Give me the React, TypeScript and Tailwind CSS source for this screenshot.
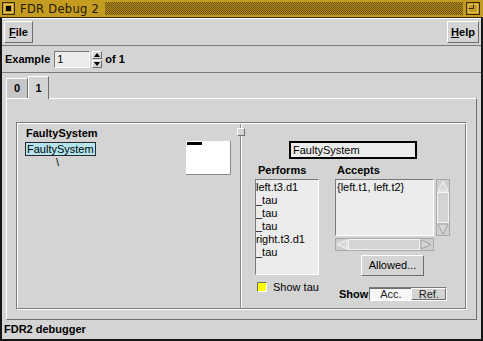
import React from 'react'

// Motif-style bevels
const raised = 'border border-t-white border-l-white border-r-[#6e6e6e] border-b-[#6e6e6e]'
const sunken = 'border border-t-[#7a7a7a] border-l-[#7a7a7a] border-r-white border-b-white'

const performs = ['left.t3.d1', '_tau', '_tau', '_tau', 'right.t3.d1', '_tau']

function TitleBar() {
  return (
    <div className="h-[18px] bg-[#c49c22] border-b border-[#3a2c00] flex items-center pl-[2px] pr-[3px]">
      <div className="w-[13px] h-[13px] border border-[#3a2c00] flex items-center justify-center">
        <div className="w-[9px] h-[9px] border border-[#e4c45c] flex items-center justify-center">
          <div className="w-[5px] h-[5px] bg-black" />
        </div>
      </div>
      <span className="ml-[5px] text-[11.5px] leading-[14px] font-['DejaVu_Sans',sans-serif] text-[#241a00] tracking-[0.3px]">
        FDR Debug 2
      </span>
      <div className="ml-[6px] flex-1 h-[13px] bg-[repeating-conic-gradient(#6e5210_0%_25%,#b08a1e_0%_50%)] bg-[length:2px_2px]" />
      <svg width="14" height="13" viewBox="0 0 14 13" className="ml-[3px]">
        <rect x="0.5" y="0.5" width="13" height="12" fill="#c49c22" stroke="#3a2c00" />
        <rect x="2.5" y="2.5" width="9" height="8" fill="none" stroke="#e4c45c" />
        <path d="M2.5 6.5 H7.5 V2.5" fill="none" stroke="#3a2c00" />
      </svg>
    </div>
  )
}

function VScroll() {
  return (
    <svg width="14" height="57" viewBox="0 0 14 57" className="ml-[2px]">
      <rect x="0.5" y="0.5" width="13" height="56" fill="#cfcfcf" stroke="#a8a8a8" />
      <polygon points="7,2 12,12 2,12" fill="#d8d8d8" stroke="#f4f4f4" />
      <rect x="1.5" y="13.5" width="11" height="30" fill="#d4d4d4" stroke="#f4f4f4" />
      <polygon points="2,45 12,45 7,55" fill="#d8d8d8" stroke="#a0a0a0" />
    </svg>
  )
}

function HScroll() {
  return (
    <svg width="99" height="13" viewBox="0 0 99 13" className="mt-[2px]">
      <rect x="0.5" y="0.5" width="98" height="12" fill="#cfcfcf" stroke="#a8a8a8" />
      <polygon points="2,6.5 12,2 12,11" fill="#d8d8d8" stroke="#f4f4f4" />
      <rect x="13.5" y="1.5" width="71" height="10" fill="#d4d4d4" stroke="#f4f4f4" />
      <polygon points="86,2 96,6.5 86,11" fill="#d8d8d8" stroke="#a0a0a0" />
    </svg>
  )
}

export default function App() {
  return (
    <div className="w-[483px] h-[341px] overflow-hidden bg-[#d4d4d4] flex flex-col font-['Liberation_Sans',Arial,sans-serif] text-black">
      <TitleBar />
      <div className="flex-1 flex flex-col border-x-2 border-b-2 border-[#161616]">
        {/* menu bar */}
        <div className="h-[28px] border-t border-t-white border-b border-b-[#7a7a7a] flex items-center justify-between px-[2px]">
          <div className={`${raised} w-[29px] h-[22px] flex items-center justify-center text-[11px] font-bold`}>
            <span className="underline">F</span>ile
          </div>
          <div className={`${raised} w-[32px] h-[22px] flex items-center justify-center text-[11px] font-bold`}>
            <span className="underline">H</span>elp
          </div>
        </div>

        {/* example selector */}
        <div className="h-[27px] border-b border-b-[#7a7a7a] flex items-center px-[3px]">
          <span className="text-[11px] font-bold">Example</span>
          <div className={`${sunken} ml-[4px] w-[36px] h-[17px] bg-[#ececec] text-[11px] leading-[15px] pl-[2px]`}>1</div>
          <div className="ml-[2px] flex flex-col gap-[1px]">
            <div className={`${raised} w-[10px] h-[8px] flex items-center justify-center`}>
              <svg width="6" height="4" viewBox="0 0 6 4"><polygon points="3,0 6,4 0,4" fill="#000" /></svg>
            </div>
            <div className={`${raised} w-[10px] h-[8px] flex items-center justify-center`}>
              <svg width="6" height="4" viewBox="0 0 6 4"><polygon points="0,0 6,0 3,4" fill="#000" /></svg>
            </div>
          </div>
          <span className="ml-[3px] text-[11px] font-bold">of 1</span>
        </div>

        {/* tabs */}
        <div className="flex-1 flex flex-col px-[4px] pt-[4px]">
          <div className="h-[21px] flex items-end">
            <div className="w-[22px] h-[20px] bg-[#c6c6c6] border-t border-l border-white border-r border-r-[#6e6e6e] flex items-center justify-center text-[11px] font-bold">
              0
            </div>
            <div className="relative z-10 -mb-[1px] w-[21px] h-[23px] bg-[#d4d4d4] border-t border-l border-white border-r border-r-[#6e6e6e] flex items-center justify-center text-[11px] font-bold">
              1
            </div>
          </div>
          <div className="flex-1 border border-t-white border-l-white border-r-[#6e6e6e] border-b-[#6e6e6e] pt-[23px] pl-[9px] pr-[9px] pb-[9px] flex">
            {/* groove frame */}
            <div className={`${sunken} flex-1 flex`}>
              <div className="flex-1 flex border border-t-white border-l-white border-r-[#7a7a7a] border-b-[#7a7a7a]">
                {/* left pane: process tree */}
                <div className="w-[221px] flex flex-col pl-[7px] pt-[3px] pr-[8px]">
                  <div className="text-[11px] font-bold leading-[13px] pl-[1px]">FaultySystem</div>
                  <div className="mt-[1px] flex justify-between">
                    <div className="flex flex-col pt-[1px]">
                      <div className="self-start border border-[#2a2a2a] bg-[#b4e4f0] h-[14px] px-[1px] text-[11px] leading-[12px]">
                        FaultySystem
                      </div>
                      <div className="ml-[31px] text-[11px] leading-[13px]">\</div>
                    </div>
                    <div className="w-[45px] h-[34px] bg-white border-r border-b border-[#8a8a8a] pt-[1px] pl-[1px]">
                      <div className="w-[15px] h-[3px] bg-black" />
                    </div>
                  </div>
                </div>

                {/* sash */}
                <div className="relative w-[4px] flex justify-center">
                  <div className="w-[2px] h-full border-l border-l-[#8a8a8a] border-r border-r-white" />
                  <div className={`${raised} absolute top-[4px] -left-[2px] w-[8px] h-[8px] bg-[#d4d4d4]`} />
                </div>

                {/* right pane: process details */}
                <div className="flex-1 flex flex-col pl-[12px] pt-[17px]">
                  <div className="ml-[34px] w-[128px] h-[18px] border-2 border-black bg-[#ececec] text-[11px] leading-[14px] pl-[2px]">
                    FaultySystem
                  </div>
                  <div className="mt-[3px] flex gap-[16px]">
                    <div className="w-[64px] flex flex-col">
                      <div className="h-[16px] leading-[16px] pl-[3px] text-[11px] font-bold">Performs</div>
                      <div className={`${sunken} mt-[1px] h-[96px] bg-[#ececec] text-[11px] leading-[13px] pt-[1px] overflow-hidden`}>
                        {performs.map((p, i) => (
                          <div key={i}>{p}</div>
                        ))}
                      </div>
                      <div className="mt-[4px] flex items-center">
                        <div className="ml-[2px] w-[10px] h-[10px] bg-[#ffff00] border border-t-[#6e6e6e] border-l-[#6e6e6e] border-r-white border-b-white" />
                        <span className="ml-[6px] text-[11px] whitespace-nowrap">Show tau</span>
                      </div>
                    </div>

                    <div className="flex flex-col">
                      <div className="h-[16px] leading-[16px] pl-[2px] text-[11px] font-bold">Accepts</div>
                      <div className="mt-[1px] flex">
                        <div className={`${sunken} w-[99px] h-[57px] bg-[#ececec] text-[11px] leading-[13px] pt-[1px] pl-[1px]`}>
                          {'{left.t1, left.t2}'}
                        </div>
                        <VScroll />
                      </div>
                      <HScroll />
                      <div className={`${raised} ml-[26px] mt-[4px] w-[63px] h-[21px] flex items-center justify-center text-[11px]`}>
                        Allowed...
                      </div>
                      <div className="mt-[10px] flex items-center">
                        <span className="ml-[4px] text-[11px] font-bold">Show</span>
                        <div className={`${sunken} ml-[1px] w-[78px] h-[14px] flex`}>
                          <div className="w-[41px] bg-[#f6f6f6] border-t border-t-[#6e6e6e] flex items-center justify-center text-[11px] leading-[11px] text-[#222]">
                            Acc.
                          </div>
                          <div className={`${raised} flex-1 flex items-center justify-center text-[11px] leading-[11px] text-[#222]`}>
                            Ref.
                          </div>
                        </div>
                      </div>
                    </div>
                  </div>
                </div>
              </div>
            </div>
          </div>
        </div>

        {/* status bar */}
        <div className="h-[19px] pl-[2px] flex items-center text-[11px] font-bold">FDR2 debugger</div>
      </div>
    </div>
  )
}
